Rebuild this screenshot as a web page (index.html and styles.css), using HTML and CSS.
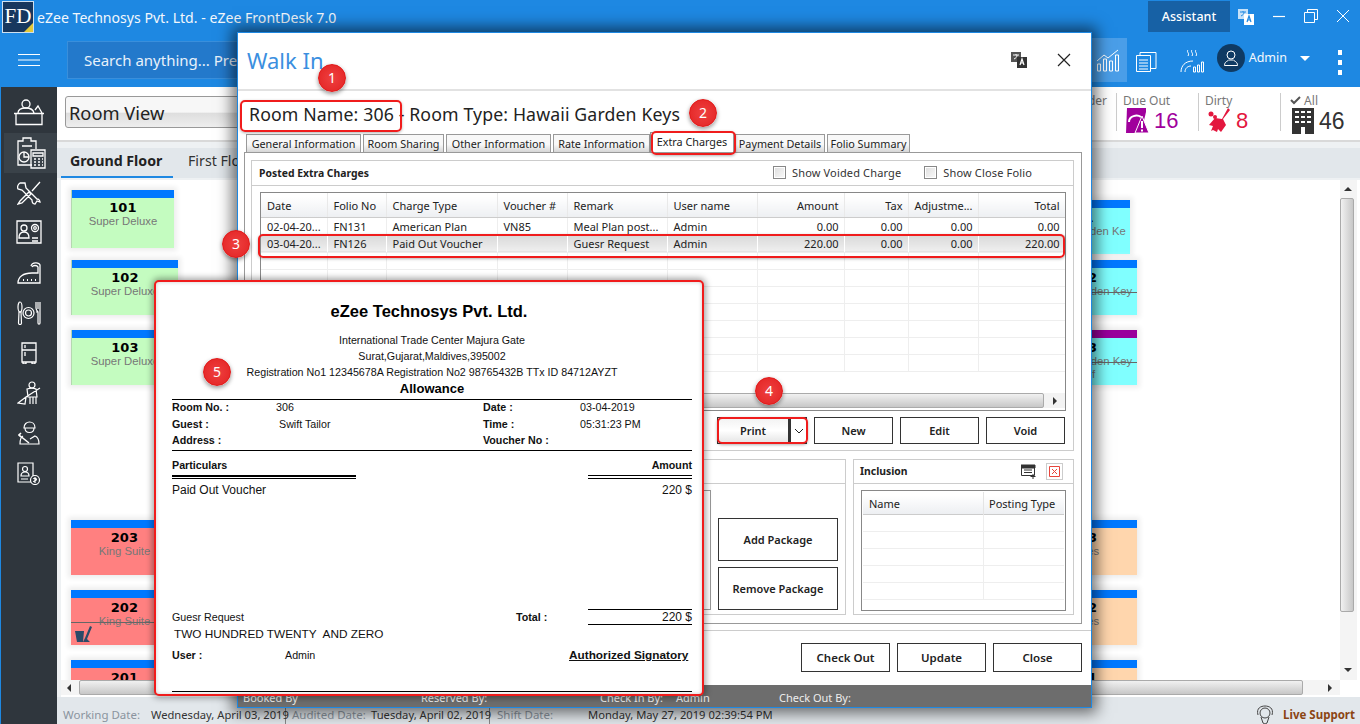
FILE: index.html
```html
<!DOCTYPE html>
<html lang="en">
<head>
<meta charset="utf-8">
<title>eZee FrontDesk</title>
<link rel="stylesheet" href="styles.css">
</head>
<body>
<div class="app">
  <header class="titlebar">
    <div class="logo"><span>FD</span><i class="logo-fold"></i></div>
    <div class="app-title">eZee Technosys Pvt. Ltd. - eZee FrontDesk 7.0</div>
    <button class="assistant">Assistant</button>
    <svg class="translate" width="18" height="18" viewBox="0 0 18 18"><path d="M1 1h10v10H1z" fill="#fff" opacity=".75"/><path d="M7 6h10v11H7z" fill="#fff"/><path d="M10 14l2-6 2 6M11 12h2" fill="none" stroke="#1e88e2" stroke-width="1.2"/><path d="M3 4h6M6 3v1M4 8c2-1 3-2 3-4" fill="none" stroke="#1e88e2" stroke-width="1"/></svg>
    <div class="win-btns">
      <svg width="14" height="14" viewBox="0 0 14 14"><path d="M1 7.500h12" stroke="#fff" stroke-width="1.200"/></svg>
      <svg width="14" height="14" viewBox="0 0 14 14"><path d="M.5 3.500h10v10H.5zM3.500 3.500V.5h10v10h-3" fill="none" stroke="#fff"/></svg>
      <svg width="14" height="14" viewBox="0 0 14 14"><path d="M1 1l12 12M13 1L1 13" stroke="#fff"/></svg>
    </div>
  </header>
  <div class="toolbar">
    <svg class="burger" width="22" height="12" viewBox="0 0 22 12"><path d="M0 .5h22M0 6h22M0 11.500h22" stroke="#fff"/></svg>
    <div class="search">Search anything... Pre</div>
    <div class="tool-right">
      <div class="tool-active">
        <svg width="24" height="24" viewBox="0 0 24 24" fill="none" stroke="#fff"><path d="M1 13l7-6 4 3 10-8"/><path d="M1.500 23v-7h3v7zM7.500 23V11h3v12zM13.500 23V13h3v10zM19.500 23V7h3v16z"/></svg>
      </div>
      <svg class="tool-ico" width="22" height="22" viewBox="0 0 22 22" fill="none" stroke="#fff"><path d="M1.500 5.500h14v16h-14zM5 5.500v-3h16v16h-5M4 10h9M4 13h9M4 16h9M4 19h9"/></svg>
      <svg class="tool-ico steam" width="24" height="24" viewBox="0 0 24 24" fill="none" stroke="#fff"><path d="M8 1c-2 2 2 3 0 6M12 1c-2 2 2 3 0 6M16 1c-2 2 2 3 0 6M1 23c0-6 4-11 12-11M13.500 23v-5h2v5zM17.500 23v-7h2v7zM21.500 23v-10h2v10zM5 23c0-4 3-6 6-6"/></svg>
      <div class="avatar">
        <svg width="16" height="16" viewBox="0 0 16 16" fill="none" stroke="#fff"><circle cx="8" cy="5" r="4"/><path d="M1.500 15.500c0-4 3-4 4-5.500h5c1 1.500 4 1.500 4 5.500z"/></svg>
      </div>
      <span class="admin">Admin</span>
      <i class="caret"></i>
      <div class="kebab"><i></i><i></i><i></i></div>
    </div>
  </div>

  <div class="body">
    <nav class="sidebar">
      <a class="nav-item"><svg width="34" height="30" viewBox="0 0 34 30" fill="none" stroke="#fff" stroke-width="1.300"><circle cx="14" cy="6" r="4"/><path d="M6 15c0-4 4-5 8-5s7 1 8 5M23 12l3-4 4 7M2 15.500h30M4 15.500v11h26v-11"/></svg></a>
      <a class="nav-item active"><svg width="30" height="32" viewBox="0 0 30 32" fill="none" stroke="#fff" stroke-width="1.300"><path d="M16 28H2V4h5V1h8v3h5v8M6 9h10"/><circle cx="8" cy="20" r="5"/><path d="M8 15v5h5"/><path d="M15 13h14v18H15zM17 16h10v3H17zM18 22h2M22 22h2M26 22h1M18 25h2M22 25h2M26 25h1M18 28h2M22 28h2M26 28h1"/></svg></a>
      <a class="nav-item"><svg width="24" height="24" viewBox="0 0 24 24" fill="none" stroke="#fff" stroke-width="1.300"><path d="M1 23l2-3 9-9 2 2-9 9zM23 1l-8 9M3 2l5 0 1 5 11 11c2 0 3 2 3 3l-3-1-2 3c-2 0-3-2-3-4L5 9 1 8C0 6 1 3 3 2z"/></svg></a>
      <a class="nav-item"><svg width="26" height="26" viewBox="0 0 26 26" fill="none" stroke="#fff" stroke-width="1.300"><path d="M1 1h24v22H1z"/><circle cx="8" cy="8" r="3"/><path d="M3 18c0-4 2-6 5-6s5 2 5 6zM16 18h6M16 21h6"/><circle cx="19" cy="8" r="3.500"/><circle cx="19" cy="8" r="1.300"/></svg></a>
      <a class="nav-item"><svg width="24" height="22" viewBox="0 0 24 22" fill="none" stroke="#fff" stroke-width="1.300"><path d="M14 4c1-4 8-4 9-1v18H1c0-6 5-10 14-10h6V5c-1-2-5-2-6 0"/><path d="M6 18h1M10 18h1M14 18h1M18 18h1" stroke-width="2"/></svg></a>
      <a class="nav-item"><svg width="24" height="24" viewBox="0 0 24 24" fill="none" stroke="#fff" stroke-width="1.200"><ellipse cx="3" cy="6" rx="2" ry="5"/><path d="M2 11h2l.5 11c0 2-3 2-3 0zM19 1v6c0 2 1 3 2 4v11c0 1.500 2 1.500 2 0V1M21 1v7M19 11h2"/><circle cx="11.500" cy="12" r="5.500"/><circle cx="11.500" cy="12" r="3"/></svg></a>
      <a class="nav-item"><svg width="16" height="22" viewBox="0 0 16 22" fill="none" stroke="#fff" stroke-width="1.300"><path d="M1 1h14v19H1zM1 8h14M4 3v3M4 10v4M2 20v2h3v-2M11 20v2h3v-2"/></svg></a>
      <a class="nav-item"><svg width="24" height="24" viewBox="0 0 24 24" fill="none" stroke="#fff" stroke-width="1.200"><circle cx="15" cy="4" r="3"/><path d="M10 8c3-1 7-1 9 0l1 8H11zM13 16v7M16 16v7M19 16v7M23 7l-14 9M9 16l-8 6 7 1z"/></svg></a>
      <a class="nav-item"><svg width="22" height="24" viewBox="0 0 22 24" fill="none" stroke="#fff" stroke-width="1.200"><path d="M6 7c0-8 11-8 11 0zM7 7c0 6 9 6 9 0M5 15c-2 1-3 4-3 8h19c0-4-1-7-4-8l-5 3"/><path d="M1 14l10 8M3 12l-2 2 2 2" stroke-width="1.600"/></svg></a>
      <a class="nav-item"><svg width="24" height="24" viewBox="0 0 24 24" fill="none" stroke="#fff" stroke-width="1.200"><path d="M14 21H1V2h15v13"/><circle cx="8" cy="8" r="2.500"/><path d="M4 15c0-3 2-4 4-4s4 1 4 4zM4 18h7"/><circle cx="18" cy="19" r="4.500"/><path d="M18 16v6M16.500 18c0-1 3-1 3 .5s-3 1-3 2.500"/></svg></a>
    </nav>

    <main class="content">
      <section class="statbar">
        <div class="view-select">Room View</div>
        <div class="stats">
          <div class="stat stat-clip"><span class="stat-label">Reminder</span></div>
          <div class="stat stat-due">
            <span class="stat-label">Due Out</span>
            <div class="stat-val">
              <svg width="24" height="25" viewBox="0 0 24 25"><path d="M2 0h19v4l-5 21H1z" fill="#a0009c"/><path d="M4 14c0-6 8-8 12-5" fill="none" stroke="#fff" stroke-width="2"/><path d="M17 8l7 17H10z" fill="#a0009c" stroke="#fff"/><path d="M17 13v7M17 21.500v2" stroke="#fff" stroke-width="2"/></svg>
              <span class="num num-due">16</span>
            </div>
          </div>
          <div class="stat stat-dirty">
            <span class="stat-label">Dirty</span>
            <div class="stat-val">
              <svg width="24" height="25" viewBox="0 0 24 25"><circle cx="4" cy="6" r="2.500" fill="#e3173e"/><circle cx="8" cy="9" r="2" fill="#e3173e"/><path d="M21 0l2 2-7 9 3 6-5 7-3-3-1 3-4-2-2 1 2-5-4-1 6-7 7 1z" fill="#e3173e"/></svg>
              <span class="num num-dirty">8</span>
            </div>
          </div>
          <div class="stat stat-all">
            <span class="stat-label"><svg width="11" height="9" viewBox="0 0 11 9"><path d="M1 4l3 3 6-6" fill="none" stroke="#555" stroke-width="2"/></svg> All</span>
            <div class="stat-val">
              <svg width="22" height="26" viewBox="0 0 22 26"><path d="M0 0h22v26H0z" fill="#333"/><path d="M3 3h4v2H3zM9 3h4v2H9zM15 3h4v2h-4zM3 8h4v2H3zM9 8h4v2H9zM15 8h4v2h-4zM3 13h4v2H3zM9 13h4v2H9zM15 13h4v2h-4zM9 19h4v7H9z" fill="#fff"/></svg>
              <span class="num num-all">46</span>
            </div>
          </div>
        </div>
      </section>
      <div class="floor-tabs">
        <span class="floor-tab current">Ground Floor</span>
        <span class="floor-tab">First Floor</span>
      </div>
      <div class="board-wrap">
        <div class="board">
          <div class="room-col">
            <div class="room room-first green"><i class="room-bar"></i><b>101</b><span>Super Deluxe</span></div>
            <div class="room wide green"><i class="room-bar"></i><b>102</b><span>Super Deluxe</span></div>
            <div class="room wide green"><i class="room-bar"></i><b>103</b><span>Super Deluxe</span></div>
            <div class="room-gap"></div>
            <div class="room wide red"><i class="room-bar"></i><b>203</b><span>King Suite</span></div>
            <div class="room wide red"><i class="room-bar"></i><b>202</b><span class="struck">King Suite</span>
              <svg class="broom" width="17" height="16" viewBox="0 0 17 16"><path d="M0 5h9l-1 11H2z" fill="#2b4a68"/><path d="M15 0l2 1-5 12 3 3H8l2-4z" fill="#2b4a68"/></svg>
            </div>
            <div class="room wide red"><i class="room-bar"></i><b>201</b><span>King Suite</span></div>
          </div>
          <div class="room-col room-col-right">
            <div class="room room-side cyan"><i class="room-bar"></i><b>301</b><span>Hawaii Garden Ke</span></div>
            <div class="room wide cyan"><i class="room-bar"></i><b>302</b><span class="struck">Hawaii Garden Key</span></div>
            <div class="room wide cyan"><i class="room-bar purple"></i><b>303</b><span class="struck">Hawaii Garden Key</span><span>Staff</span></div>
            <div class="room-gap"></div>
            <div class="room wide peach"><i class="room-bar"></i><b>403</b><span>Suites</span></div>
            <div class="room wide peach"><i class="room-bar"></i><b>402</b><span>Suites</span></div>
            <div class="room wide peach"><i class="room-bar"></i><b>401</b><span>Suites</span></div>
          </div>
          <div class="vscroll"><i class="sc-up"></i><div class="vthumb"></div><i class="sc-down"></i></div>
        </div>
        <div class="hscroll"><i class="sc-left"></i><div class="hthumb"></div><i class="sc-right"></i></div>
      </div>
      <footer class="statusbar">
        <span class="st-key st-work">Working Date:</span><span class="st-val st-w">Wednesday, April 03, 2019</span>
        <span class="st-key st-aud">Audited Date:</span><span class="st-val st-a">Tuesday, April 02, 2019</span>
        <span class="st-key st-shift">Shift Date:</span><span class="st-val">Monday, May 27, 2019 02:39:54 PM</span>
        <span class="live">
          <svg width="18" height="20" viewBox="0 0 18 20" fill="none" stroke="#444"><circle cx="9" cy="8" r="5"/><path d="M2 10C0 3 5 1 9 1s9 2 7 9M5 12l2 6 2 1 2-1 2-6"/></svg>
          Live Support
        </span>
      </footer>
    </main>
  </div>
</div>

<div class="modal">
  <div class="modal-head">
    <span class="modal-title">Walk In</span>
    <svg class="m-trans" width="18" height="18" viewBox="0 0 18 18"><path d="M1 1h10v10H1z" fill="#555"/><path d="M7 6h10v11H7z" fill="#333"/><path d="M10 14l2-6 2 6M11 12h2" fill="none" stroke="#fff" stroke-width="1.200"/><path d="M3 4h6M6 3v1M4 8c2-1 3-2 3-4" fill="none" stroke="#fff"/></svg>
    <svg class="m-close" width="14" height="14" viewBox="0 0 14 14"><path d="M1 1l12 12M13 1L1 13" stroke="#222" stroke-width="1.200"/></svg>
  </div>
  <div class="room-line">Room Name: 306 - Room Type: Hawaii Garden Keys</div>
  <div class="tabs">
    <span class="tab t1">General Information</span>
    <span class="tab t2">Room Sharing</span>
    <span class="tab t3">Other Information</span>
    <span class="tab t4">Rate Information</span>
    <span class="tab t5 on">Extra Charges</span>
    <span class="tab t6">Payment Details</span>
    <span class="tab t7">Folio Summary</span>
  </div>
  <div class="tab-panel">
    <section class="group g-posted">
      <div class="group-head">
        <b>Posted Extra Charges</b>
        <label class="check chk1"><i></i>Show Voided Charge</label>
        <label class="check chk2"><i></i>Show Close Folio</label>
      </div>
      <div class="grid">
        <table class="tbl">
          <colgroup><col class="c1"><col class="c2"><col class="c3"><col class="c4"><col class="c5"><col class="c6"><col class="c7"><col class="c8"><col class="c9"><col class="c10"></colgroup>
          <thead><tr><th>Date</th><th>Folio No</th><th>Charge Type</th><th>Voucher #</th><th>Remark</th><th>User name</th><th class="r">Amount</th><th class="r">Tax</th><th class="r">Adjustme...</th><th class="r">Total</th></tr></thead>
          <tbody>
            <tr class="row1"><td>02-04-20...</td><td>FN131</td><td>American Plan</td><td>VN85</td><td>Meal Plan post...</td><td>Admin</td><td class="r">0.00</td><td class="r">0.00</td><td class="r">0.00</td><td class="r">0.00</td></tr>
            <tr class="sel"><td>03-04-20...</td><td>FN126</td><td>Paid Out Voucher</td><td></td><td>Guesr Request</td><td>Admin</td><td class="r">220.00</td><td class="r">0.00</td><td class="r">0.00</td><td class="r">220.00</td></tr>
            <tr><td></td><td></td><td></td><td></td><td></td><td></td><td></td><td></td><td></td><td></td></tr>
            <tr><td></td><td></td><td></td><td></td><td></td><td></td><td></td><td></td><td></td><td></td></tr>
            <tr><td></td><td></td><td></td><td></td><td></td><td></td><td></td><td></td><td></td><td></td></tr>
            <tr><td></td><td></td><td></td><td></td><td></td><td></td><td></td><td></td><td></td><td></td></tr>
            <tr><td></td><td></td><td></td><td></td><td></td><td></td><td></td><td></td><td></td><td></td></tr>
            <tr><td></td><td></td><td></td><td></td><td></td><td></td><td></td><td></td><td></td><td></td></tr>
            <tr><td></td><td></td><td></td><td></td><td></td><td></td><td></td><td></td><td></td><td></td></tr>
          </tbody>
        </table>
        <div class="grid-scroll"><div class="grid-thumb"></div><i class="sc-right"></i></div>
      </div>
      <div class="actions">
        <button class="btn b-print">Print</button><button class="btn b-drop"><svg width="10" height="6" viewBox="0 0 10 6"><path d="M1 1l4 4 4-4" fill="none" stroke="#222"/></svg></button>
        <button class="btn b-act">New</button>
        <button class="btn b-act">Edit</button>
        <button class="btn b-act">Void</button>
      </div>
    </section>
    <div class="lower">
      <section class="group g-pack">
        <div class="group-head small"></div>
        <div class="pack-body">
          <div class="pack-grid"></div>
          <div class="pack-btns">
            <button class="btn b-pack">Add Package</button>
            <button class="btn b-pack">Remove Package</button>
          </div>
        </div>
      </section>
      <section class="group g-incl">
        <div class="group-head small">
          <b>Inclusion</b>
          <svg class="incl-add" width="15" height="15" viewBox="0 0 15 15"><path d="M.5 1.500h13v10H.5z" fill="#fff" stroke="#333"/><path d="M0 1h14v3H0zM3 6h8M3 8.500h8" stroke="#333" fill="#333"/><path d="M12 10v5M9.500 12.500h5" stroke="#333"/></svg>
          <span class="incl-x"><svg width="11" height="11" viewBox="0 0 11 11"><path d="M.5.5h10v10H.5z" fill="none" stroke="#e8453c"/><path d="M3 3l5 5M8 3L3 8" stroke="#e8453c"/></svg></span>
        </div>
        <div class="incl-grid">
          <div class="incl-head"><span>Name</span><span>Posting Type</span></div>
          <div class="incl-row"></div><div class="incl-row"></div><div class="incl-row"></div><div class="incl-row"></div><div class="incl-row"></div>
        </div>
      </section>
    </div>
  </div>
  <div class="modal-foot">
    <button class="btn b-foot">Check Out</button>
    <button class="btn b-foot">Update</button>
    <button class="btn b-foot">Close</button>
  </div>
  <div class="modal-bar">
    <span class="mb1">Booked By</span><span class="mb2">Reserved By:</span><span class="mb3">Check In By:</span><span class="mb4">Admin</span><span>Check Out By:</span>
  </div>
</div>

<article class="voucher">
  <h1>eZee Technosys Pvt. Ltd.</h1>
  <p class="v-addr">International Trade Center Majura Gate</p>
  <p class="v-addr">Surat,Gujarat,Maldives,395002</p>
  <p class="v-addr">Registration No1 12345678A Registration No2 98765432B TTx ID 84712AYZT</p>
  <h2>Allowance</h2>
  <div class="v-info">
    <div class="v-row"><b>Room No. :</b><span>306</span><b>Date :</b><span>03-04-2019</span></div>
    <div class="v-row"><b>Guest :</b><span class="v-in">Swift Tailor</span><b>Time :</b><span>05:31:23 PM</span></div>
    <div class="v-row"><b>Address :</b><span></span><b>Voucher No :</b><span></span></div>
  </div>
  <div class="v-heads"><b>Particulars</b><b>Amount</b></div>
  <div class="v-rules"><i class="rule-l"></i><i class="rule-r"></i></div>
  <div class="v-item"><span>Paid Out Voucher</span><span>220 $</span></div>
  <div class="v-total"><span class="v-remark">Guesr Request</span><b>Total :</b><span class="v-sum">220 $</span></div>
  <div class="v-words">TWO HUNDRED TWENTY&nbsp; AND ZERO</div>
  <div class="v-user"><b>User :</b><span class="v-name">Admin</span><b class="v-sign">Authorized Signatory</b></div>
</article>

<div class="mark m-room"></div>
<div class="mark m-tab"></div>
<div class="mark m-row"></div>
<div class="mark m-print"></div>
<div class="dot d1">1</div>
<div class="dot d2">2</div>
<div class="dot d3">3</div>
<div class="dot d4">4</div>
<div class="dot d5">5</div>
</body>
</html>
```
FILE: styles.css
```css
* { box-sizing: border-box; }
html, body { margin: 0; height: 100%; overflow: hidden; }
body { font-family: "Noto Sans", "Open Sans", sans-serif; color: #222; background: #fff; position: relative; width: 1360px; height: 724px; }
button { font-family: inherit; cursor: default; }
i { display: block; }

.app { display: flex; flex-direction: column; height: 724px; }

/* title bar */
.titlebar { height: 38px; background: #1e88e2; display: flex; align-items: flex-start; color: #fff; flex: none; }
.logo { width: 32px; height: 32px; margin: 1px 0 0 2px; background: #17375e; border: 1px solid #cfe0ef; color: #fff; font: 21px/28px "Liberation Serif", serif; text-align: center; position: relative; overflow: hidden; }
.logo-fold { position: absolute; right: 0; bottom: 0; width: 0; height: 0; border-style: solid; border-width: 0 0 9px 9px; border-color: transparent transparent #e3c93a transparent; }
.app-title { margin: 7px 0 0 3px; font-size: 14.100px; line-height: 21px; color: #f2f7fc; }
.assistant { margin: 1px 0 0 auto; width: 82px; height: 31px; background: #1761a5; border: 0; color: #fff; font-size: 12.500px; font-weight: 500; position: relative; left: 1px; }
.translate { margin: 8px 0 0 8px; }
.win-btns { display: flex; gap: 18px; margin: 9px 10px 0 17px; }
.win-btns svg { display: block; }

/* toolbar */
.toolbar { height: 49px; background: #1e88e2; display: flex; align-items: flex-start; flex: none; }
.burger { margin: 16px 0 0 18px; }
.search { margin: 3px 0 0 27px; width: 400px; height: 38px; background: #2379cb; border: 1px solid #3a8fdb; color: #e8f1fa; font-size: 15px; line-height: 36px; padding-left: 16px; white-space: nowrap; }
.tool-right { margin-left: auto; display: flex; align-items: flex-start; }
.tool-active { width: 37px; height: 44px; background: #4a9ee8; display: flex; align-items: center; justify-content: center; margin: 0 8px 0 0; }
.tool-ico { margin: 12px 0 0 0; }
.tool-ico.steam { margin: 11px 0 0 23px; }
.avatar { width: 28px; height: 28px; border-radius: 50%; background: #0f3a63; display: flex; align-items: center; justify-content: center; margin: 6px 0 0 13px; }
.admin { color: #f4f8fc; font-size: 12.500px; line-height: 18px; margin: 11px 0 0 4px; }
.caret { width: 0; height: 0; border-style: solid; border-width: 5px 5px 0 5px; border-color: #fff transparent transparent; margin: 18px 0 0 13px; }
.kebab { display: flex; flex-direction: column; gap: 5px; margin: 12px 18px 0 28px; }
.kebab i { width: 4px; height: 5px; background: #fff; }

/* body */
.body { flex: 1; display: flex; min-height: 0; }
.sidebar { width: 57px; border-left: 1px solid #1e88e2; background: #2f363d; display: flex; flex-direction: column; flex: none; padding-top: 6px; }
.nav-item { height: 40px; display: flex; align-items: center; justify-content: center; flex: none; }
.nav-item.active { background: #3a4249; margin-left: 3px; }

.content { flex: 1; display: flex; flex-direction: column; min-width: 0; background: #eef1f3; }
.statbar { height: 55px; background: #fff; display: flex; align-items: flex-start; border-bottom: 2px solid #d9d9d9; padding-left: 8px; flex: none; }
.view-select { width: 500px; height: 32px; margin-top: 9px; border: 1px solid #999; border-radius: 3px; background: linear-gradient(#f7f7f7 50%, #dedede 55%, #eee); font-size: 18.300px; line-height: 32px; padding-left: 3px; color: #222; }
.stats { margin-left: auto; display: flex; margin-top: 6px; }
.stat { width: 82px; height: 38px; border-left: 1px solid #ccc; padding-left: 6px; position: relative; }
.stat-clip { width: 30px; border: 0; overflow: hidden; direction: rtl; padding: 0 9px 0 0; }
.stat-label { display: block; color: #777; font-size: 12px; line-height: 15px; white-space: nowrap; }
.stat-val { display: flex; align-items: center; gap: 5px; padding-left: 2px; }
.num { font: 22px/24px "Liberation Sans", sans-serif; }
.num-due { color: #a0009c; }
.num-dirty { color: #e3173e; }
.num-all { color: #333; font-size: 23px; }
.stat-all { width: 80px; padding-left: 9px; }

.floor-tabs { height: 30px; margin-top: 6px; background: #e2e7eb; display: flex; font-size: 14.200px; line-height: 26px; flex: none; padding-left: 4px; }
.floor-tab { padding: 0 9px; height: 30px; color: #333; white-space: nowrap; }
.floor-tab.current { font-weight: 700; width: 112px; border-bottom: 2px solid #1e88e2; color: #222; }
.floor-tab + .floor-tab { padding-left: 15px; }

.board-wrap { height: 517px; margin-left: 4px; flex: none; background: #fff; margin-top: 2px; display: flex; flex-direction: column; }
.board { height: 500px; display: flex; overflow: hidden; }
.room-col { width: 959px; flex: none; padding: 10px 0 0 10px; }
.room-col-right { width: 320px; padding-left: 10px; }
.room { position: relative; width: 107px; height: 55px; margin-bottom: 15px; text-align: center; box-shadow: 0 0 5px 3px #eee; color: #000; overflow: hidden; }
.room b { display: block; font: 700 13px/14px "DejaVu Sans", sans-serif; padding-top: 3px; letter-spacing: .2px; }
.room span { display: block; font: 11.300px/14px "Liberation Sans", sans-serif; color: #777; margin-top: -1px; white-space: nowrap; }
.room-bar { height: 8px; background: #0078ff; }
.room-bar.purple { background: #99009c; }
.room-first { width: 103px; height: 58px; margin-bottom: 12px; }
.room-side { width: 100px; height: 54px; margin-top: 10px; margin-bottom: 6px; }
.room-gap { height: 120px; }
.green { background: #c4fcc0; border-left: 1px solid #b4d8b0; }
.red { background: #ff8080; }
.cyan { background: #80ffff; }
.peach { background: #ffd6ad; }
.struck::after { content: ""; position: absolute; left: 0; right: 0; top: 32px; height: 1px; background: #666; }
.broom { position: absolute; left: 4px; bottom: 3px; }

.vscroll { width: 17px; background: #f4f4f4; position: relative; flex: none; }
.vthumb { position: absolute; left: 0; top: 18px; width: 14px; height: 414px; border: 1px solid #aaa; border-radius: 2px; background: linear-gradient(90deg, #f1f1f1, #c7c7c7); }
.sc-up, .sc-down, .sc-left, .sc-right { position: absolute; width: 0; height: 0; border-style: solid; }
.sc-up { left: 4px; top: 7px; border-width: 0 4px 4px; border-color: transparent transparent #333; }
.sc-down { left: 4px; bottom: 8px; border-width: 4px 4px 0; border-color: #333 transparent transparent; }
.sc-left { left: 6px; top: 4px; border-width: 4px 4px 4px 0; border-color: transparent #333 transparent transparent; }
.sc-right { right: 8px; top: 4px; border-width: 4px 0 4px 4px; border-color: transparent transparent transparent #333; }
.hscroll { height: 15px; background: #f4f4f4; position: relative; flex: none; width: 1279px; }
.hthumb { position: absolute; left: 18px; top: 0; width: 1224px; height: 15px; border: 1px solid #aaa; border-radius: 2px; background: linear-gradient(#f1f1f1, #c7c7c7); }

.statusbar { height: 27px; display: flex; align-items: center; font-size: 11.500px; padding: 8px 0 0 6px; background: #e2e7eb; flex: none; white-space: nowrap; }
.st-key { color: #8a949e; }
.st-val { color: #333; font-size: 11.200px; }
.st-work { width: 88px; }
.st-w { width: 135px; border-right: 1px solid #888; height: 19px; line-height: 19px; }
.st-aud { padding-left: 6px; width: 85px; }
.st-a { width: 119px; border-right: 1px solid #888; height: 19px; line-height: 19px; }
.st-shift { padding-left: 7px; width: 98px; }
.live { margin-left: auto; margin-right: 5px; display: flex; align-items: center; gap: 9px; color: #8b4513; font-weight: 700; }

/* modal */
.modal { position: absolute; left: 237px; top: 32px; width: 855px; height: 676px; background: #fff; border: 1px solid #1e88e2; box-shadow: 0 0 14px 5px rgba(0, 0, 0, .55); display: flex; flex-direction: column; }
.modal-head { height: 58px; border-bottom: 2px solid #e2e2e2; display: flex; align-items: center; flex: none; padding-bottom: 2px; }
.modal-title { margin-left: 9px; font-size: 22px; color: #3b8fdf; line-height: 30px; }
.m-trans { margin-left: auto; }
.m-close { margin: 0 20px 0 29px; }
.room-line { height: 43px; padding: 9px 0 0 11px; font-size: 17.700px; letter-spacing: .13px; line-height: 28px; color: #222; white-space: nowrap; flex: none; }
.tabs { height: 18px; margin-left: 8px; display: flex; gap: 2px; align-items: flex-end; flex: none; font-size: 10.800px; }
.tab { height: 18px; text-align: center; line-height: 17px; border: 1px solid #999; border-bottom: 0; background: linear-gradient(#f8f8f8 55%, #d6d6d6); color: #222; white-space: nowrap; }
.t1 { width: 115px; } .t2 { width: 81px; } .t3 { width: 105px; } .t4 { width: 97px; }
.t5 { width: 84px; height: 20px; background: #fff; margin-left: -2px; }
.t6 { width: 90px; margin-left: -1px; } .t7 { width: 83px; }
.tab-panel { margin: 0 9px 0 6px; height: 472px; border: 1px solid #999; padding: 7px 7px 0 6px; flex: none; background: #fff; }
.group { border: 1px solid #ccc; }
.g-posted { height: 291px; }
.group-head { height: 25px; border-bottom: 1px solid #ccc; display: flex; align-items: center; font-size: 11px; padding: 0 41px 1px 7px; }
.group-head b { font-weight: 700; color: #222; font-size: 10.400px; }
.check { display: flex; align-items: center; gap: 6px; color: #333; letter-spacing: .15px; }
.check i { width: 13px; height: 13px; border: 1px solid #888; background: linear-gradient(135deg, #ddd, #fafafa); box-shadow: inset 0 0 0 1px #fff; }
.chk1 { margin-left: auto; }
.chk2 { margin-left: 23px; }
.grid { margin: 6px 7px 0 8px; height: 219px; border: 1px solid #888; position: relative; overflow: hidden; }
.tbl { border-collapse: collapse; table-layout: fixed; width: 804px; font-size: 11px; color: #222; }
.c1 { width: 66px; } .c2 { width: 59px; } .c3 { width: 111px; } .c4 { width: 70px; } .c5 { width: 100px; } .c6 { width: 90px; } .c7 { width: 87px; } .c8 { width: 64px; } .c9 { width: 70px; } .c10 { width: 87px; }
.tbl th { height: 24px; font-weight: 400; text-align: left; padding: 2px 5px 0 6px; background: linear-gradient(#fff 15%, #edeff2); border-right: 1px solid #e9e9e9; border-bottom: 1px solid #ccc; white-space: nowrap; overflow: hidden; }
.tbl td { height: 17px; line-height: 15px; padding: 0 5px 0 6px; border-right: 1px solid #eee; border-bottom: 1px solid #eee; white-space: nowrap; overflow: hidden; }
.tbl .r { text-align: right; padding-left: 0; }
.row1 td { height: 18px; }
.sel td { background: linear-gradient(#d9d9d9, #efefef); border-right-color: transparent; }
.grid-scroll { position: absolute; left: 0; right: 0; bottom: 2px; height: 15px; background: #f3f3f3; }
.grid-thumb { position: absolute; left: 0; right: 21px; top: 0; height: 15px; border: 1px solid #aaa; border-radius: 2px; background: linear-gradient(#f1f1f1, #c7c7c7); }
.actions { display: flex; justify-content: flex-end; padding: 6px 8px 0 0; gap: 7px; }
.btn { background: #fff; border: 1px solid #333; font-size: 11px; font-weight: 600; color: #222; padding: 0; }
.b-print { width: 72px; height: 27px; margin-right: -7px; background: linear-gradient(#f2f2f2, #fff 50%, #e4e4e4); }
.b-drop { width: 18px; height: 27px; display: flex; align-items: center; justify-content: center; border-left: 2px solid #333; }
.b-act { width: 79px; height: 27px; }
.lower { display: flex; gap: 7px; margin-top: 8px; height: 156px; }
.g-pack { width: 595px; }
.g-incl { width: 221px; }
.group-head.small { height: 24px; padding: 0 0 1px 6px; }
.pack-body { display: flex; padding: 6px 7px 0 8px; }
.pack-grid { width: 453px; height: 120px; border: 1px solid #999; }
.pack-btns { margin-left: 7px; display: flex; flex-direction: column; justify-content: flex-end; gap: 6px; }
.b-pack { width: 120px; height: 43px; }
.incl-add { margin-left: auto; }
.incl-x { width: 17px; height: 17px; border: 1px solid #ccc; display: flex; align-items: center; justify-content: center; margin: 0 10px 0 10px; }
.incl-grid { margin: 6px 7px 0 7px; height: 121px; border: 1px solid #888; padding: 1px; font-size: 11px; }
.incl-head { display: grid; grid-template-columns: 120px 1fr; height: 23px; line-height: 23px; background: linear-gradient(#fff 15%, #edeff2); border-bottom: 1px solid #ccc; color: #222; }
.incl-head span { padding-left: 6px; }
.incl-head span + span { border-left: 1px solid #e4e4e4; padding-left: 5px; }
.incl-row { height: 17px; border-bottom: 1px solid #eee; background: linear-gradient(90deg, transparent 120px, #eee 120px, #eee 121px, transparent 121px); }
.modal-foot { margin-top: 6px; padding: 12px 9px 0 0; height: 55px; border-top: 1px solid #ccc; display: flex; justify-content: flex-end; gap: 7px; flex: none; }
.b-foot { width: 89px; height: 29px; font-size: 11.500px; }
.modal-bar { height: 22px; background: #6d6d6d; color: #eee; font-size: 11px; line-height: 26px; padding-left: 5px; display: flex; flex: none; white-space: nowrap; }
.mb1 { width: 178px; } .mb2 { width: 179px; } .mb3 { width: 76px; } .mb4 { width: 103px; }

/* voucher */
.voucher { position: absolute; left: 154px; top: 280px; width: 550px; height: 416px; background: #fff; border: 2px solid #f01c1c; border-radius: 5px; box-shadow: 0 0 6px 2px rgba(0, 0, 0, .35), inset 0 0 4px rgba(0,0,0,.2); padding: 19px 10px 0 16px; font-family: "Liberation Sans", sans-serif; color: #111; font-size: 10.700px; }
.voucher h1 { margin: 0; padding-right: 6px; font-size: 16.500px; line-height: 20px; text-align: center; height: 31px; color: #000; }
.v-addr { margin: 0; text-align: center; height: 16px; line-height: 16px; }
.voucher h2 { margin: 1px 0 0; font-size: 13px; line-height: 16px; text-align: center; color: #000; }
.v-info { border-top: 1px solid #000; border-bottom: 1px solid #000; margin-top: 2px; height: 52px; }
.v-row { display: grid; grid-template-columns: 104px 207px 97px 1fr; height: 16.500px; line-height: 16.500px; }
.v-row:first-child { margin-top: -1px; }
.v-in { padding-left: 3px; }
.v-heads { display: flex; justify-content: space-between; margin-top: 7px; line-height: 14px; }
.v-rules { display: flex; justify-content: space-between; margin-top: 3px; }
.rule-l { width: 184px; height: 4px; border-top: 2px solid #000; border-bottom: 1px solid #000; }
.rule-r { width: 104px; height: 4px; border-top: 1px solid #000; border-bottom: 1px solid #000; }
.v-item { display: flex; justify-content: space-between; font-size: 12px; line-height: 16px; margin-top: 3px; }
.v-total { display: flex; margin-top: 111px; align-items: center; height: 16px; }
.v-remark { width: 344px; }
.v-total b { width: 72px; }
.v-sum { width: 104px; border-top: 1px solid #000; border-bottom: 1px solid #000; text-align: right; font-size: 12px; line-height: 14px; height: 16px; }
.v-words { font-size: 11.800px; line-height: 16px; margin: 1px 0 0 2px; }
.v-user { display: flex; margin-top: 5px; line-height: 16px; }
.v-user b:first-child { width: 113px; }
.v-name { width: 284px; }
.v-sign { font-size: 11.800px; text-decoration: underline; }
.voucher::after { content: ""; position: absolute; left: 16px; right: 10px; bottom: 2px; height: 1px; background: #000; }

/* annotations */
.mark { position: absolute; border: 2px solid #f01c1c; border-radius: 5px; box-shadow: 0 1px 3px rgba(0, 0, 0, .3); }
.m-room { left: 240px; top: 100px; width: 162px; height: 32px; }
.m-tab { left: 651px; top: 131px; width: 85px; height: 24px; }
.m-row { left: 258px; top: 234px; width: 807px; height: 24px; }
.m-print { left: 717px; top: 417px; width: 91px; height: 27px; }
.dot { position: absolute; width: 28px; height: 28px; border-radius: 50%; background: radial-gradient(#ee4040, #e32222); border: 1px solid #e01818; color: #fff; font: 14px/26px "Noto Sans", sans-serif; text-align: center; box-shadow: 0 2px 4px rgba(0, 0, 0, .4); }
.d1 { left: 318px; top: 64px; }
.d2 { left: 689px; top: 99px; }
.d3 { left: 222px; top: 230px; }
.d4 { left: 755px; top: 377px; }
.d5 { left: 203px; top: 358px; }
```
